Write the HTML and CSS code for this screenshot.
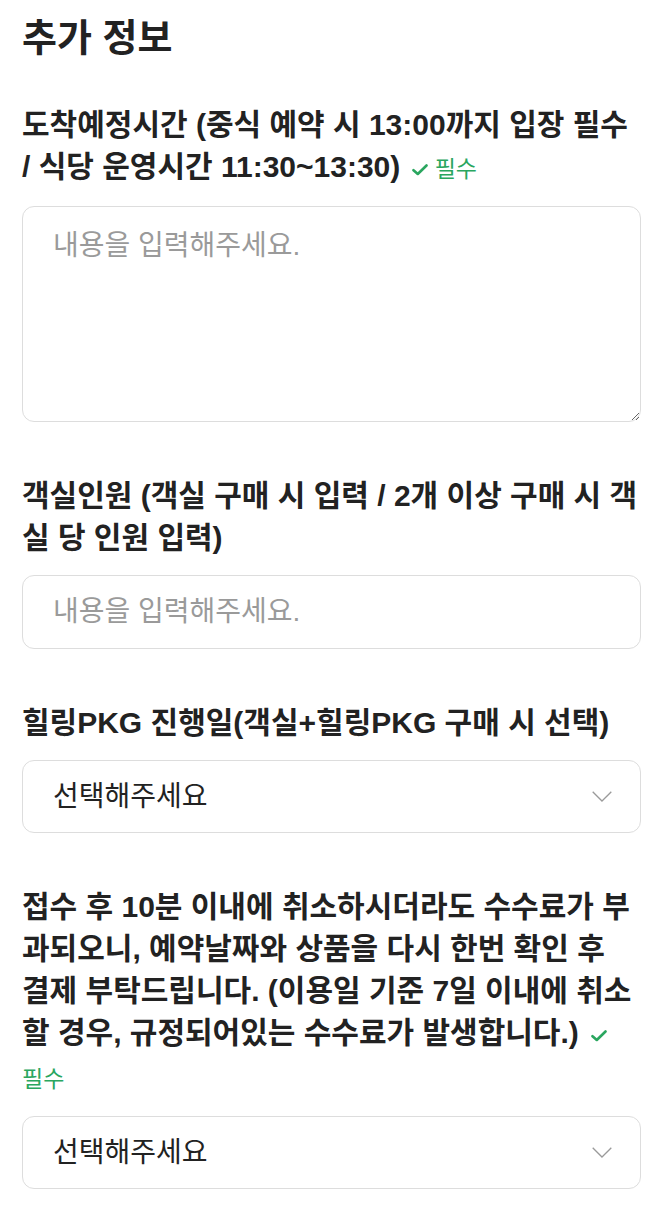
FILE: index.html
```html
<!DOCTYPE html>
<html lang="ko">
<head>
<meta charset="utf-8">
<title>추가 정보</title>
<link rel="stylesheet" href="styles.css">
</head>
<body>
<div class="page">
  <h2 class="title">추가 정보</h2>

  <div class="field">
    <div class="label">도착예정시간 (중식 예약 시 13:00까지 입장 필수<br>/ 식당 운영시간 11:30~13:30)<span class="req"><svg class="check" viewBox="0 0 16 12" width="16" height="12"><path d="M1.5 6.2 L5.8 10 L14.5 1.5" fill="none" stroke="#2aa65f" stroke-width="2.6" stroke-linecap="round" stroke-linejoin="round"/></svg> <span class="req-text">필수</span></span></div>
    <textarea class="textarea" placeholder="내용을 입력해주세요."></textarea>
  </div>

  <div class="field">
    <div class="label">객실인원 (객실 구매 시 입력 / 2개 이상 구매 시 객<br>실 당 인원 입력)</div>
    <input class="input" type="text" placeholder="내용을 입력해주세요.">
  </div>

  <div class="field">
    <div class="label">힐링PKG 진행일(객실+힐링PKG 구매 시 선택)</div>
    <div class="select-wrap">
      <select class="select"><option>선택해주세요</option></select>
      <svg class="chevron" viewBox="0 0 20 11" width="20" height="11"><path d="M0.7 0.7 L10 10 L19.3 0.7" fill="none" stroke="#9a9a9a" stroke-width="1.3"/></svg>
    </div>
  </div>

  <div class="field">
    <div class="label">접수 후 10분 이내에 취소하시더라도 수수료가 부<br>과되오니, 예약날짜와 상품을 다시 한번 확인 후<br>결제 부탁드립니다. (이용일 기준 7일 이내에 취소<br>할 경우, 규정되어있는 수수료가 발생합니다.)<span class="req"><svg class="check" viewBox="0 0 16 12" width="16" height="12"><path d="M1.5 6.2 L5.8 10 L14.5 1.5" fill="none" stroke="#2aa65f" stroke-width="2.6" stroke-linecap="round" stroke-linejoin="round"/></svg> <span class="req-text">필수</span></span></div>
    <div class="select-wrap">
      <select class="select"><option>선택해주세요</option></select>
      <svg class="chevron" viewBox="0 0 20 11" width="20" height="11"><path d="M0.7 0.7 L10 10 L19.3 0.7" fill="none" stroke="#9a9a9a" stroke-width="1.3"/></svg>
    </div>
  </div>
</div>
</body>
</html>
```

FILE: styles.css
```css
html, body {
  margin: 0;
  padding: 0;
  background: #ffffff;
}

body {
  font-family: "Liberation Sans", "Noto Sans CJK KR", sans-serif;
  color: #222222;
}

.page {
  padding: 12px 22px 0 22px;
}

.title {
  margin: 0 0 40px 0;
  font-size: 38px;
  line-height: 52px;
  font-weight: 700;
  color: #222222;
}

.field {
  margin-bottom: 53px;
}

.label {
  font-size: 30px;
  line-height: 42px;
  font-weight: 700;
  color: #222222;
  margin-bottom: 16px;
}

.req {
  margin-left: 12px;
  color: #2aa65f;
  font-size: 23px;
  line-height: 42px;
  font-weight: 400;
}

.check {
  vertical-align: 1px;
}

.req-text {
  color: #2aa65f;
  white-space: nowrap;
}

.textarea,
.input,
.select {
  display: block;
  box-sizing: border-box;
  width: 100%;
  margin: 0;
  border: 1px solid #dddddd;
  border-radius: 12px;
  background: #ffffff;
  font-family: "Liberation Sans", "Noto Sans CJK KR", sans-serif;
  font-size: 28px;
  color: #222222;
  outline: none;
}

.textarea {
  height: 216px;
  padding: 19px 30px;
  line-height: 40px;
  resize: vertical;
}

.input {
  height: 74px;
  padding: 0 30px;
}

.textarea::placeholder,
.input::placeholder {
  color: #9a9a9a;
}

.select-wrap {
  position: relative;
}

.select {
  height: 73px;
  padding: 0 30px;
  appearance: none;
  -webkit-appearance: none;
}

.chevron {
  position: absolute;
  right: 29px;
  top: 31px;
  pointer-events: none;
}
```
